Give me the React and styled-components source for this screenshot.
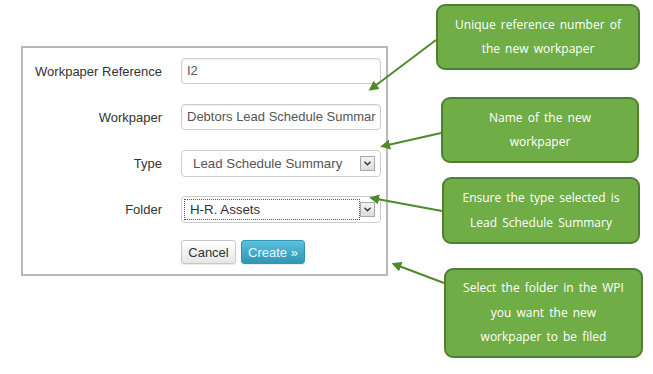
import React from 'react';
import styled, { createGlobalStyle } from 'styled-components';

const GlobalStyle = createGlobalStyle`
	html, body {
		margin: 0;
		padding: 0;
		background: #ffffff;
	}
	body {
		font-family: 'Liberation Sans', Arial, sans-serif;
	}
`;

const CALLOUTS = [
	{ left: 436, top: 4, width: 204, height: 66, lines: ['Unique reference number of', 'the new workpaper'] },
	{ left: 441, top: 97, width: 198, height: 66, lines: ['Name of the new', 'workpaper'] },
	{ left: 442, top: 177, width: 198, height: 67, lines: ['Ensure the type selected is', 'Lead Schedule Summary'] },
	{ left: 444, top: 268, width: 199, height: 90, lines: ['Select the folder in the WPI', 'you want the new', 'workpaper to be filed'] },
];

// arrow lines go from the callout edge to the form field they point at
const ARROWS = [
	{ x1: 436, y1: 40, x2: 375, y2: 86 },
	{ x1: 441, y1: 133, x2: 388, y2: 145 },
	{ x1: 442, y1: 211, x2: 377, y2: 199 },
	{ x1: 444, y1: 283, x2: 399, y2: 266 },
];

const ChevronIcon = () => (
	<svg width='7' height='5' viewBox='0 0 7 5'>
		<path d='M0.5 0.8 L3.5 3.8 L6.5 0.8' fill='none' stroke='#333' strokeWidth='1.4' />
	</svg>
);

const FakeSelect = ({ value, focused }) => (
	<SelectBox>
		<SelectValue $focused={focused}>{value}</SelectValue>
		<ArrowButton>
			<ChevronIcon />
		</ArrowButton>
	</SelectBox>
);

const App = () => {
	return (
		<>
			<GlobalStyle />
			<Canvas>
				<Panel>
					<Form>
						<Label>Workpaper Reference</Label>
						<Input>I2</Input>

						<Label>Workpaper</Label>
						<Input>Debtors Lead Schedule Summar</Input>

						<Label>Type</Label>
						<FakeSelect value='Lead Schedule Summary' />

						<Label>Folder</Label>
						<FakeSelect value='H-R. Assets' focused />

						<span />
						<Actions>
							<Button>Cancel</Button>
							<Button $primary>Create »</Button>
						</Actions>
					</Form>
				</Panel>

				<Arrows width='653' height='374' viewBox='0 0 653 374'>
					<defs>
						<marker id='head' viewBox='0 0 10 10' refX='2' refY='5' markerWidth='5' markerHeight='5' orient='auto-start-reverse'>
							<path d='M0 0 L10 5 L0 10 z' fill='#4f8a2b' />
						</marker>
					</defs>
					{ARROWS.map((a, i) => (
						<line key={i} x1={a.x1} y1={a.y1} x2={a.x2} y2={a.y2} stroke='#4f8a2b' strokeWidth='2' markerEnd='url(#head)' />
					))}
				</Arrows>

				{CALLOUTS.map((c, i) => (
					<Callout key={i} style={{ left: c.left, top: c.top, width: c.width, height: c.height }}>
						{c.lines.map((line) => (
							<CalloutLine key={line}>{line}</CalloutLine>
						))}
					</Callout>
				))}
			</Canvas>
		</>
	);
};

const Canvas = styled.div`
	position: relative;
	width: 653px;
	height: 374px;
	padding: 46px 0 0 21px;
	box-sizing: border-box;
	overflow: hidden;
`;

const Panel = styled.section`
	width: 367px;
	height: 230px;
	box-sizing: border-box;
	border: 2px solid #b8b8b8;
	padding: 10px 5px 0 0;
`;

const Form = styled.div`
	display: grid;
	grid-template-columns: 139px 200px;
	grid-auto-rows: 26px;
	column-gap: 19px;
	row-gap: 20px;
	align-items: center;
`;

const Label = styled.label`
	text-align: right;
	font-size: 13px;
	color: #333333;
	padding-top: 1px;
`;

const Input = styled.div`
	height: 26px;
	box-sizing: border-box;
	border: 1px solid #cccccc;
	border-radius: 4px;
	box-shadow: inset 0 1px 1px rgba(0, 0, 0, 0.06);
	padding: 0 4px 0 5px;
	font-size: 13px;
	line-height: 24px;
	color: #555555;
	white-space: nowrap;
	background: #ffffff;
`;

const SelectBox = styled.div`
	height: 27px;
	box-sizing: border-box;
	border: 1px solid #cccccc;
	border-radius: 4px;
	display: flex;
	align-items: center;
	padding: 0 5px 0 2px;
	background: #ffffff;
`;

const SelectValue = styled.div`
	flex: 1;
	height: 21px;
	box-sizing: border-box;
	font-size: 13.3px;
	line-height: 19px;
	color: ${(p) => (p.$focused ? '#333333' : '#555555')};
	padding-left: ${(p) => (p.$focused ? '5px' : '8px')};
	border: 1px dotted ${(p) => (p.$focused ? '#555555' : 'transparent')};
	white-space: nowrap;
`;

const ArrowButton = styled.div`
	width: 15px;
	height: 15px;
	box-sizing: border-box;
	border: 1px solid #a9a9a9;
	background: linear-gradient(#f4f4f4, #dcdcdc);
	display: flex;
	align-items: center;
	justify-content: center;
`;

const Actions = styled.div`
	display: flex;
	gap: 5px;
	align-self: start;
	margin-top: -2px;
`;

const Button = styled.button`
	height: 24px;
	padding: 0 6px;
	font-family: 'Liberation Sans', Arial, sans-serif;
	font-size: 13px;
	border-radius: 3px;
	cursor: pointer;
	color: ${(p) => (p.$primary ? '#eef8fc' : '#333333')};
	border: 1px solid ${(p) => (p.$primary ? '#2f96b4' : '#c8c8c8')};
	background: ${(p) => (p.$primary ? 'linear-gradient(#5bc0de, #2f96b4)' : 'linear-gradient(#ffffff, #e6e6e6)')};
	box-shadow: 0 1px 1px rgba(0, 0, 0, 0.08);
	min-width: ${(p) => (p.$primary ? '63px' : '55px')};
`;

const Arrows = styled.svg`
	position: absolute;
	left: 0;
	top: 0;
	pointer-events: none;
`;

const Callout = styled.div`
	position: absolute;
	box-sizing: border-box;
	background: #70ad47;
	border: 2px solid #507e32;
	border-radius: 9px;
	display: flex;
	flex-direction: column;
	justify-content: center;
	align-items: center;
	font-family: 'Open Sans', 'Noto Sans', sans-serif;
	font-size: 12px;
	color: #ffffff;
`;

const CalloutLine = styled.div`
	line-height: 24.5px;
	white-space: nowrap;
	word-spacing: 2px;
`;

export default App;
